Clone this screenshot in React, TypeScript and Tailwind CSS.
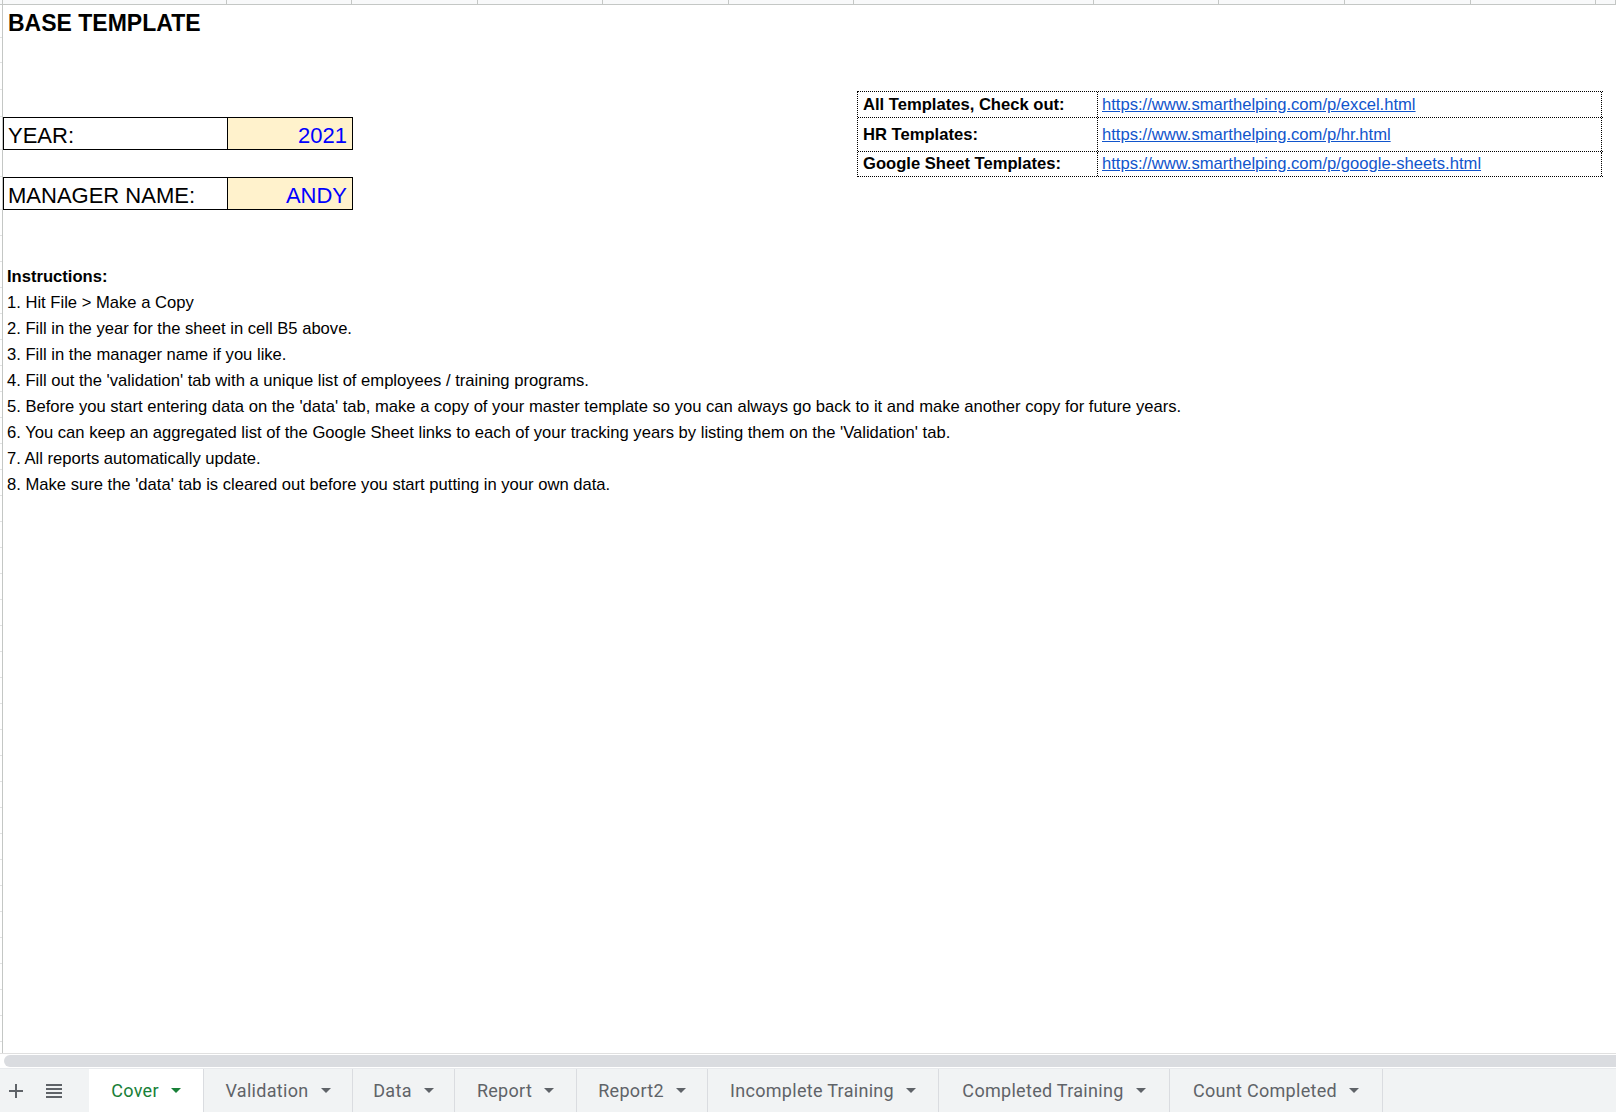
import React from "react";

const colWidths = [225, 125, 127, 125, 127, 125, 241, 126, 126, 126, 126, 20];

const links = [
  { label: "All Templates, Check out:", url: "https://www.smarthelping.com/p/excel.html", h: "h-[26px]" },
  { label: "HR Templates:", url: "https://www.smarthelping.com/p/hr.html", h: "h-[34px]" },
  { label: "Google Sheet Templates:", url: "https://www.smarthelping.com/p/google-sheets.html", h: "h-[25px]" },
];

const instructions = [
  "1. Hit File > Make a Copy",
  "2. Fill in the year for the sheet in cell B5 above.",
  "3. Fill in the manager name if you like.",
  "4. Fill out the 'validation' tab with a unique list of employees / training programs.",
  "5. Before you start entering data on the 'data' tab, make a copy of your master template so you can always go back to it and make another copy for future years.",
  "6. You can keep an aggregated list of the Google Sheet links to each of your tracking years by listing them on the 'Validation' tab.",
  "7. All reports automatically update.",
  "8. Make sure the 'data' tab is cleared out before you start putting in your own data.",
];

const tabs = [
  { name: "Cover", w: "w-[115px]", active: true },
  { name: "Validation", w: "w-[149px]" },
  { name: "Data", w: "w-[102px]" },
  { name: "Report", w: "w-[122px]" },
  { name: "Report2", w: "w-[131px]" },
  { name: "Incomplete Training", w: "w-[231px]" },
  { name: "Completed Training", w: "w-[231px]" },
  { name: "Count Completed", w: "w-[213px]" },
];

function Caret({ active }: { active?: boolean }) {
  return (
    <svg width="10" height="5" viewBox="0 0 10 5" className="shrink-0">
      <path d="M0 0h10L5 5z" fill={active ? "#188038" : "#5f6368"} />
    </svg>
  );
}

function BoxRow({ label, value }: { label: string; value: string }) {
  return (
    <div className="w-[350px] h-[33px] flex border border-black">
      <div className="w-[224px] border-r border-black flex items-end pl-[4px] pb-[2px]">
        <span className="text-[22px] leading-[22px] whitespace-nowrap">{label}</span>
      </div>
      <div className="w-[124px] bg-[#fff2cc] flex items-end justify-end pr-[5px] pb-[2px]">
        <span className="text-[22px] leading-[22px] text-[#0000ff]">{value}</span>
      </div>
    </div>
  );
}

export default function App() {
  return (
    <div className="w-[1616px] h-[1112px] flex flex-col bg-white overflow-hidden font-['Liberation_Sans',Arial,sans-serif] text-black">
      {/* column header strip */}
      <div className="h-[5px] flex bg-[#f8f9fa] border-b border-[#c4c7c5] shrink-0">
        <div className="w-[3px] border-r border-[#c4c7c5]" />
        {colWidths.map((w, i) => (
          <div key={i} className="border-r border-[#c4c7c5]" style={{ width: w }} />
        ))}
      </div>

      <div className="flex-1 flex min-h-0">
        {/* row header strip */}
        <div className="w-[3px] border-r border-[#c4c7c5] flex flex-col shrink-0">
          {[33, 25, 27, 27, 33, 27, 33, 26, 26, 26, 26, 26, 26, 26, 26, 26, 26, 26, 26, 26, 26, 26, 26, 26, 26, 26, 26, 26, 26, 26, 26, 26, 26, 26, 26, 26, 26, 26, 26, 26].map((h, i) => (
            <div key={i} className="border-b border-[#e2e3e3] shrink-0" style={{ height: h }} />
          ))}
        </div>

        <div className="flex-1 flex flex-col">
          {/* row 1: title */}
          <div className="h-[33px] flex items-end pl-[5px] pb-[3px]">
            <span className="text-[23px] font-bold leading-[23px]">BASE TEMPLATE</span>
          </div>
          <div className="h-[25px]" />
          <div className="h-[27px]" />

          {/* rows 4-7 */}
          <div className="flex">
            <div className="w-[854px] flex flex-col">
              <div className="h-[27px]" />
              <BoxRow label="YEAR:" value="2021" />
              <div className="h-[27px]" />
              <BoxRow label="MANAGER NAME:" value="ANDY" />
            </div>

            <div className="w-[746px] flex flex-col mt-[1px] border-l border-t border-dotted border-black self-start">
              {links.map((l) => (
                <div key={l.label} className={`${l.h} flex border-b border-dotted border-black`}>
                  <div className="w-[240px] border-r border-dotted border-black flex items-center pl-[5px] pt-[1px]">
                    <span className="text-[16.6px] font-bold whitespace-nowrap">{l.label}</span>
                  </div>
                  <div className="w-[504px] border-r border-dotted border-black flex items-center pl-[4px] pt-[1px]">
                    <a className="text-[16.6px] text-[#1155cc] underline whitespace-nowrap">{l.url}</a>
                  </div>
                </div>
              ))}
            </div>
          </div>

          <div className="h-[26px]" />
          <div className="h-[26px]" />
          <div className="h-[26px] flex items-end pl-[4px] pb-[3px]">
            <span className="text-[16.6px] font-bold leading-[17px]">Instructions:</span>
          </div>
          {instructions.map((t) => (
            <div key={t} className="h-[26px] flex items-end pl-[4px] pb-[3px]">
              <span className="text-[16.6px] leading-[17px] whitespace-nowrap">{t}</span>
            </div>
          ))}
        </div>
      </div>

      {/* horizontal scrollbar */}
      <div className="h-[15px] shrink-0 border-t border-[#e0e0e0] pt-[1px] pl-[4px] bg-white">
        <div className="h-[12px] bg-[#dadce0] rounded-l-full" />
      </div>

      {/* sheet tabs */}
      <div className="h-[44px] shrink-0 flex bg-[#f1f3f4] border-t border-[#e8eaed] font-['Roboto','Open_Sans',sans-serif]">
        <div className="w-[89px] flex items-center shrink-0">
          <svg width="14" height="14" viewBox="0 0 14 14" className="ml-[9px]">
            <path d="M6 0h2v6h6v2H8v6H6V8H0V6h6z" fill="#5f6368" />
          </svg>
          <svg width="16" height="14" viewBox="0 0 16 14" className="ml-[23px]">
            <path d="M0 0h16v2H0zM0 4h16v2H0zM0 8h16v2H0zM0 12h16v2H0z" fill="#5f6368" />
          </svg>
        </div>
        {tabs.map((t) => (
          <div
            key={t.name}
            className={`${t.w} shrink-0 flex items-center justify-center gap-[12px] border-r border-[#dadce0] ${
              t.active ? "bg-white text-[#188038]" : "text-[#5f6368]"
            }`}
          >
            <span className="text-[18px] font-normal tracking-[0.3px] whitespace-nowrap">{t.name}</span>
            <Caret active={t.active} />
          </div>
        ))}
      </div>
    </div>
  );
}
